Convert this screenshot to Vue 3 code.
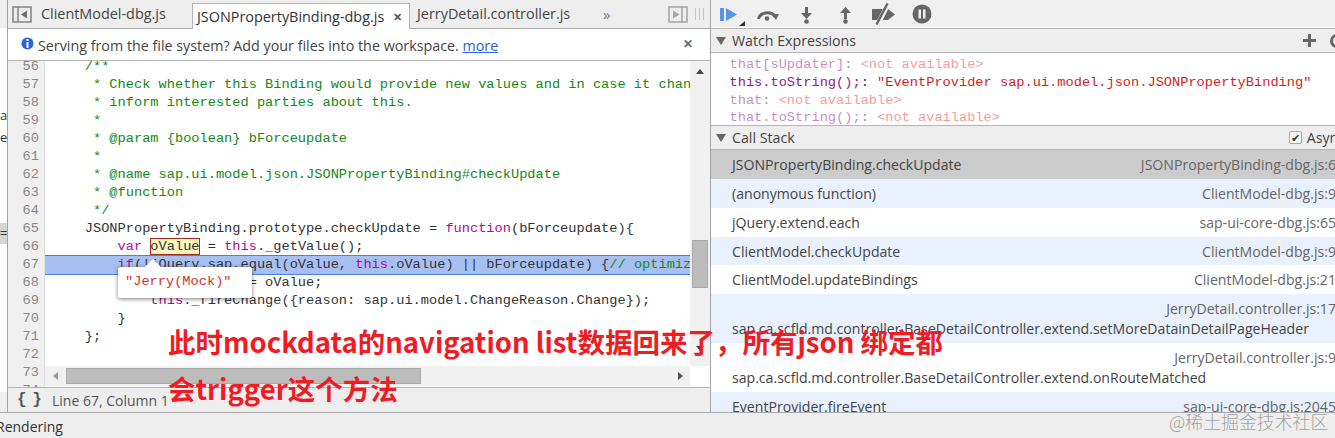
<script setup>
const lines = [
  { n: 56, html: '    <span class="c">/**</span>' },
  { n: 57, html: '     <span class="c">* Check whether this Binding would provide new values and in case it changed,</span>' },
  { n: 58, html: '     <span class="c">* inform interested parties about this.</span>' },
  { n: 59, html: '     <span class="c">*</span>' },
  { n: 60, html: '     <span class="c">* @param {boolean} bForceupdate</span>' },
  { n: 61, html: '     <span class="c">*</span>' },
  { n: 62, html: '     <span class="c">* @name sap.ui.model.json.JSONPropertyBinding#checkUpdate</span>' },
  { n: 63, html: '     <span class="c">* @function</span>' },
  { n: 64, html: '     <span class="c">*/</span>' },
  { n: 65, html: '    JSONPropertyBinding.prototype.checkUpdate = <span class="k">function</span>(bForceupdate){' },
  { n: 66, html: '        <span class="k">var</span> <span class="hl">oValue</span> = <span class="k">this</span>._getValue();' },
  { n: 67, active: true, html: '        <span class="k">if</span>(!jQuery.sap.equal(oValue, <span class="k">this</span>.oValue) || bForceupdate) {<span class="c">// optimization</span>' },
  { n: 68, html: '            <span class="k">this</span>.oValue = oValue;' },
  { n: 69, html: '            <span class="k">this</span>._fireChange({reason: sap.ui.model.ChangeReason.Change});' },
  { n: 70, html: '        }' },
  { n: 71, html: '    };' },
  { n: 72, html: '&nbsp;' },
  { n: 73, html: '&nbsp;' },
  { n: 74, html: '&nbsp;' }
]
const frames = [
  { fn: 'JSONPropertyBinding.checkUpdate', loc: 'JSONPropertyBinding-dbg.js:6', cls: 'sel' },
  { fn: '(anonymous function)', loc: 'ClientModel-dbg.js:9', cls: 'alt' },
  { fn: 'jQuery.extend.each', loc: 'sap-ui-core-dbg.js:65', cls: '' },
  { fn: 'ClientModel.checkUpdate', loc: 'ClientModel-dbg.js:9', cls: 'alt short' },
  { fn: 'ClientModel.updateBindings', loc: 'ClientModel-dbg.js:21', cls: '' },
  { fn: 'sap.ca.scfld.md.controller.BaseDetailController.extend.setMoreDatainDetailPageHeader', loc: 'JerryDetail.controller.js:17', cls: 'alt two' },
  { fn: 'sap.ca.scfld.md.controller.BaseDetailController.extend.onRouteMatched', loc: 'JerryDetail.controller.js:9', cls: 'two' },
  { fn: 'EventProvider.fireEvent', loc: 'sap-ui-core-dbg.js:2045', cls: 'alt' }
]
</script>

<template>
  <div class="root">
    <div class="main">
      <div class="strip">
        <span class="strip-a">a</span>
        <span class="strip-e">e</span>
        <span class="strip-sel">=</span>
      </div>
      <section class="editor">
        <div class="tabs">
          <svg class="tb-icon" width="20" height="17" viewBox="0 0 20 17">
            <rect x="1" y="1" width="18" height="15" fill="none" stroke="#8a8a8a" stroke-width="1.6"/>
            <path d="M6 1v15" stroke="#8a8a8a" stroke-width="1.6"/>
            <path d="M15 4.500v8L9 8.500z" fill="#6e6e6e"/>
          </svg>
          <span class="tab first">ClientModel-dbg.js</span>
          <span class="tab active">JSONPropertyBinding-dbg.js<span class="x">✕</span></span>
          <span class="tab third">JerryDetail.controller.js</span>
          <span class="more">»</span>
          <svg class="tb-icon right" width="20" height="17" viewBox="0 0 20 17">
            <rect x="1" y="1" width="18" height="15" fill="none" stroke="#a8a8a8" stroke-width="1.6"/>
            <path d="M14 1v15" stroke="#a8a8a8" stroke-width="1.6"/>
            <path d="M5 4.500v8L11.500 8.500z" fill="#a8a8a8"/>
          </svg>
          <span class="grip"></span>
        </div>
        <div class="info">
          <svg class="info-i" width="13" height="13" viewBox="0 0 13 13">
            <circle cx="6.500" cy="6.500" r="6" fill="#2b62d8"/>
            <rect x="5.500" y="2" width="2" height="2" fill="#fff"/>
            <rect x="5.500" y="5" width="2" height="6" fill="#fff"/>
          </svg>
          <span class="info-t">Serving from the file system? Add your files into the workspace. <a class="link">more</a></span>
          <span class="info-x">✕</span>
        </div>
        <div class="code-wrap">
          <div class="code-col">
            <div class="code">
              <div v-for="l in lines" :key="l.n" class="row" :class="{ on: l.active }">
                <span class="num">{{ l.n }}</span>
                <span class="src" v-html="l.html"></span>
              </div>
            </div>
            <div class="hbar">
              <span class="arrow-l"></span>
              <span class="hthumb"></span>
              <span class="arrow-r"></span>
            </div>
          </div>
          <div class="vcol">
            <div class="vbar">
              <span class="arrow-u"></span>
              <span class="vthumb"></span>
              <span class="arrow-d"></span>
            </div>
          </div>
          <div class="tip">
            <span class="tip-nub"></span>
            "Jerry(Mock)"
          </div>
        </div>
        <div class="status">
          <span class="braces">{ }</span>
          <span class="pos">Line 67, Column 1</span>
        </div>
      </section>
      <aside class="side">
        <div class="dbg">
          <svg class="d1" width="26" height="22" viewBox="0 0 26 22">
            <rect x="0" y="3" width="4" height="13" fill="#5b93ee"/>
            <path d="M6 3l11 6.500L6 16z" fill="#5b93ee"/>
            <path d="M25 16v5h-6z" fill="#333"/>
          </svg>
          <svg class="d2" width="23" height="14" viewBox="0 0 23 14">
            <path d="M1.500 11a9 7 0 0 1 16.500 -3" fill="none" stroke="#666" stroke-width="3"/>
            <path d="M14 6h8l-3 6z" fill="#666"/>
            <circle cx="10" cy="10.500" r="2.300" fill="#666"/>
          </svg>
          <svg class="d3" width="11" height="17" viewBox="0 0 11 17">
            <rect x="4" y="0" width="3" height="6" fill="#666"/>
            <path d="M0 6h11L5.500 12z" fill="#666"/>
            <circle cx="5.500" cy="14.500" r="2.300" fill="#666"/>
          </svg>
          <svg class="d4" width="11" height="17" viewBox="0 0 11 17">
            <path d="M0 6h11L5.500 0z" fill="#666"/>
            <rect x="4" y="6" width="3" height="6" fill="#666"/>
            <circle cx="5.500" cy="14.500" r="2.300" fill="#666"/>
          </svg>
          <svg class="d5" width="23" height="22" viewBox="0 0 23 22">
            <path d="M0 6h16l7 5.500-7 5.500H0z" fill="#666"/>
            <path d="M5.500 22L16.500 0" stroke="#f0f0f0" stroke-width="5"/>
            <path d="M4.500 21.500L15.500 .5" stroke="#666" stroke-width="2.400"/>
          </svg>
          <svg class="d6" width="20" height="20" viewBox="0 0 20 20">
            <circle cx="10" cy="10" r="9.500" fill="#666"/>
            <rect x="6.500" y="5.500" width="2.500" height="9" fill="#f0f0f0"/>
            <rect x="11" y="5.500" width="2.500" height="9" fill="#f0f0f0"/>
          </svg>
        </div>
        <div class="pane-h">
          <span class="tri"></span>Watch Expressions
          <svg class="plus" width="13" height="13" viewBox="0 0 13 13"><path d="M0 6.500h13M6.500 0v13" stroke="#666" stroke-width="3"/></svg>
          <span class="refresh"></span>
        </div>
        <div class="watch">
          <div class="w dim"><span class="p">that[sUpdater]</span>: <span class="na">&lt;not available&gt;</span></div>
          <div class="w"><span class="p">this.toString();</span>: <span class="s">"EventProvider sap.ui.model.json.JSONPropertyBinding"</span></div>
          <div class="w dim"><span class="p">that</span>: <span class="na">&lt;not available&gt;</span></div>
          <div class="w dim"><span class="p">that.toString();</span>: <span class="na">&lt;not available&gt;</span></div>
        </div>
        <div class="pane-h">
          <span class="tri"></span>Call Stack
          <label class="async"><span class="cb">✔</span>Async</label>
        </div>
        <div class="stack">
          <div v-for="f in frames" :key="f.fn" class="frame" :class="f.cls">
            <span class="loc">{{ f.loc }}</span>
            <span class="fn">{{ f.fn }}</span>
          </div>
        </div>
      </aside>
    </div>
    <footer class="drawer">Rendering</footer>
    <div class="note n1">此时mockdata的navigation list数据回来了，所有json 绑定都</div>
    <div class="note n2">会trigger这个方法</div>
    <div class="mark">@稀土掘金技术社区</div>
  </div>
</template>

<style>
html, body { margin: 0; background: #fff; overflow: hidden; }
</style>

<style scoped>
.root {
  position: relative;
  width: 1335px;
  height: 438px;
  overflow: hidden;
  display: flex;
  flex-direction: column;
  background: #eee;
  font-family: "Open Sans", "Noto Sans", sans-serif;
  font-size: 14px;
  color: #333;
}
.main { display: flex; height: 413px; flex: none; box-sizing: border-box; border-bottom: 1px solid #aaa; }
.strip {
  width: 8px;
  flex: none;
  box-sizing: border-box;
  background: linear-gradient(#eee 0 28px, #fff 28px 392px, #eee 392px);
  border-right: 1px solid #a3a3a3;
  overflow: hidden;
  font-size: 13px;
  padding-top: 106px;
  display: flex;
  flex-direction: column;
}
.strip-a { height: 22px; line-height: 18px; }
.strip-e { height: 95px; line-height: 18px; }
.strip-sel { width: 7px; height: 21px; background: #d4d4d4; line-height: 20px; flex: none; }
.editor { width: 702px; flex: none; display: flex; flex-direction: column; background: #eee; }
.tabs {
  height: 29px;
  flex: none;
  box-sizing: border-box;
  display: flex;
  align-items: center;
  border-bottom: 1px solid #a9a9a9;
}
.tb-icon { margin-left: 4px; flex: none; }
.tb-icon.right { margin-left: 0; margin-top: 1px; }
.tab { line-height: 30px; font-size: 14.400px; white-space: nowrap; color: #444; box-sizing: border-box; }
.tab.first { padding-left: 9px; width: 160px; }
.tab.active {
  background: #fff;
  width: 218px;
  height: 26px;
  padding: 0 4px;
  line-height: 25px;
  align-self: flex-end;
  margin-bottom: -1px;
  border: 1px solid #b5b5b5;
  border-bottom: none;
  color: #333;
  display: flex;
  justify-content: space-between;
}
.tab.third { width: 193px; padding-left: 7px; }
.x { font-size: 11px; font-weight: bold; color: #555; margin-right: 3px; }
.more { width: 65px; flex: none; color: #777; font-size: 15px; line-height: 26px; align-self: flex-start; margin-top: 1px; }
.grip {
  margin-left: 7px;
  width: 10px; height: 12px;
  flex: none;
  background: repeating-linear-gradient(90deg, #c4c4c4 0 1px, transparent 1px 4px);
}
.info {
  height: 32px;
  flex: none;
  box-sizing: border-box;
  display: flex;
  align-items: center;
  gap: 4px;
  padding-left: 13px;
  background: #fff;
  border-bottom: 1px solid #b5b5b5;
  white-space: nowrap;
  color: #444;
}
.info-i { margin-top: -3px; flex: none; }
.info-t { font-size: 14.300px; padding-top: 2px; }
.link { color: #2a60d8; text-decoration: underline; }
.info-x { margin-left: auto; margin-right: 17px; font-size: 12px; font-weight: bold; color: #666; margin-top: -3px; }
.code-wrap { height: 326px; flex: none; display: flex; position: relative; background: #fff; }
.code-col { width: 682px; flex: none; position: relative; }
.code { height: 326px; overflow: hidden; display: flex; flex-direction: column; background: #fff; }
.row {
  display: flex;
  height: 18px;
  min-height: 18px;
  flex: none;
  line-height: 18px;
  font-family: "Liberation Mono", monospace;
  font-size: 13.670px;
  color: #333;
  white-space: pre;
}
.row:first-child { margin-top: -3px; }
.row.on .src { background: #a8bff2; box-shadow: 0 -1px 0 #4a7ee8, 0 1px 0 #4a7ee8; flex: 1; overflow: hidden; }
.num {
  display: block;
  width: 37px;
  height: 18px;
  flex: none;
  padding-right: 5px;
  box-sizing: border-box;
  background: #f0f0f0;
  border-right: 1px solid #e0e0e0;
  text-align: right;
  color: #888;
}
.src { padding-left: 7px; min-width: 0; }
.src :deep(.c) { color: #168816; }
.src :deep(.k) { color: #aa0d91; }
.src :deep(.hl) {
  background: #fdf7bf;
  outline: 1px solid #a52a1e;
  outline-offset: -1px;
  padding: 1px 0;
}
.hbar {
  position: absolute;
  left: 37px;
  top: 305px;
  width: 645px;
  height: 20px;
  background: #f1f1f1;
  display: flex;
  align-items: center;
  box-sizing: border-box;
  padding-left: 8px;
}
.hthumb { margin-left: 8px; width: 355px; height: 16px; flex: none; background: #bcbcbc; box-shadow: inset 0 0 0 1px #aaa; }
.arrow-l { border: 4px solid transparent; border-left: 0; border-right: 5px solid #999; }
.arrow-r { margin-left: auto; margin-right: 7px; border: 4px solid transparent; border-right: 0; border-left: 5px solid #555; }
.vcol { width: 20px; flex: none; background: #fff; }
.vbar { height: 305px; background: #f1f1f1; display: flex; flex-direction: column; align-items: center; box-sizing: border-box; padding-top: 8px; }
.vthumb { margin-top: 166px; width: 16px; height: 48px; flex: none; background: #bcbcbc; box-shadow: inset 0 0 0 1px #aaa; }
.arrow-u { border: 4px solid transparent; border-top: 0; border-bottom: 5px solid #444; }
.arrow-d { margin-top: 58px; border: 4px solid transparent; border-bottom: 0; border-top: 5px solid #444; }
.tip {
  position: absolute;
  left: 110px;
  top: 206px;
  width: 134px;
  height: 31px;
  box-sizing: border-box;
  background: #fff;
  border-radius: 2px;
  box-shadow: 0 1px 4px rgba(0, 0, 0, .5);
  padding-left: 7px;
  line-height: 29px;
  font-family: "Liberation Mono", monospace;
  font-size: 13.670px;
  color: #d2322a;
  white-space: nowrap;
  z-index: 2;
}
.tip-nub {
  position: absolute;
  left: 27px; top: -8px;
  border: 8px solid transparent;
  border-top: 0;
  border-bottom: 8px solid #fff;
}
.status {
  height: 25px;
  flex: none;
  box-sizing: border-box;
  border-top: 1px solid #b5b5b5;
  display: flex;
  align-items: center;
  background: #eee;
}
.braces { width: 44px; padding-left: 9px; box-sizing: border-box; font-family: "Liberation Mono", monospace; font-weight: bold; font-size: 16px; letter-spacing: -2px; color: #555; }
.pos { color: #555; }
.side { flex: 1; min-width: 0; border-left: 1px solid #a3a3a3; background: #fff; display: flex; flex-direction: column; overflow: hidden; }
.dbg {
  height: 28px;
  flex: none;
  box-sizing: border-box;
  display: flex;
  align-items: flex-start;
  background: #f0f0f0;
  border-bottom: 1px solid #fff;
  padding-left: 9px;
}
.dbg svg { flex: none; }
.d1 { margin-top: 5px; }
.d2 { margin: 8px 0 0 11px; }
.d3 { margin: 7px 0 0 21px; }
.d4 { margin: 7px 0 0 28px; }
.d5 { margin: 3px 0 0 21px; }
.d6 { margin: 4px 0 0 17px; }
.pane-h {
  height: 25px;
  box-sizing: border-box;
  display: flex;
  align-items: center;
  background: #eee;
  border-top: 1px solid #b5b5b5;
  border-bottom: 1px solid #b5b5b5;
  color: #444;
  font-size: 14.200px;
  flex: none;
  white-space: nowrap;
}
.tri { width: 0; height: 0; margin: 0 6px 0 5px; border: 5px solid transparent; border-top: 8px solid #666; border-bottom: 0; }
.plus { margin-left: auto; flex: none; }
.refresh { margin-left: 14px; margin-right: -9px; width: 14px; height: 14px; border: 3px solid #666; border-radius: 50%; box-sizing: border-box; flex: none; }
.watch {
  height: 72px;
  box-sizing: border-box;
  padding: 3px 0 0 18.500px;
  overflow: hidden;
  flex: none;
  font-family: "Liberation Mono", monospace;
  font-size: 13.670px;
  line-height: 17.800px;
  white-space: nowrap;
}
.w .p { color: #8e1a8e; }
.w .s { color: #d01f1f; }
.w.dim { opacity: .5; }
.w .na { color: #f03a3a; }
.async { margin-left: auto; margin-right: -10px; display: flex; align-items: center; gap: 5px; flex: none; }
.cb {
  width: 13px; height: 13px;
  box-sizing: border-box;
  border: 1px solid #aaa;
  border-radius: 2px;
  background: #f4f4f4;
  font-size: 11px;
  line-height: 11px;
  color: #333;
  text-align: center;
}
.stack { flex: 1; overflow: hidden; background: #fff; }
.frame {
  height: 29px;
  box-sizing: border-box;
  display: flex;
  flex-direction: row-reverse;
  justify-content: space-between;
  align-items: center;
  padding: 0 0 0 21px;
  margin-right: -1px;
  white-space: nowrap;
  color: #444;
  font-size: 14.100px;
}
.frame.sel { background: #ccc; }
.frame.alt { background: #e8f1fd; }
.frame.short { height: 28px; }
.frame.two { height: 49px; flex-direction: column; align-items: stretch; justify-content: flex-start; padding-top: 5px; line-height: 20px; }
.loc { color: #666; flex: none; }
.two .loc { align-self: flex-end; }
.drawer { height: 25px; flex: none; line-height: 28px; margin-left: -4px; color: #333; }
.note {
  position: absolute;
  left: 168px;
  font-family: "Noto Sans CJK SC", "Noto Sans", sans-serif;
  font-weight: 700;
  font-size: 27.500px;
  line-height: 38px;
  color: #f01c24;
  white-space: nowrap;
}
.n1 { top: 322px; }
.n2 { top: 369px; }
.mark {
  position: absolute;
  left: 1169px;
  top: 409px;
  font-family: "Noto Sans CJK SC", sans-serif;
  font-weight: 300;
  font-size: 17.900px;
  line-height: 24px;
  color: rgba(90, 90, 90, .55);
  white-space: nowrap;
}
</style>
